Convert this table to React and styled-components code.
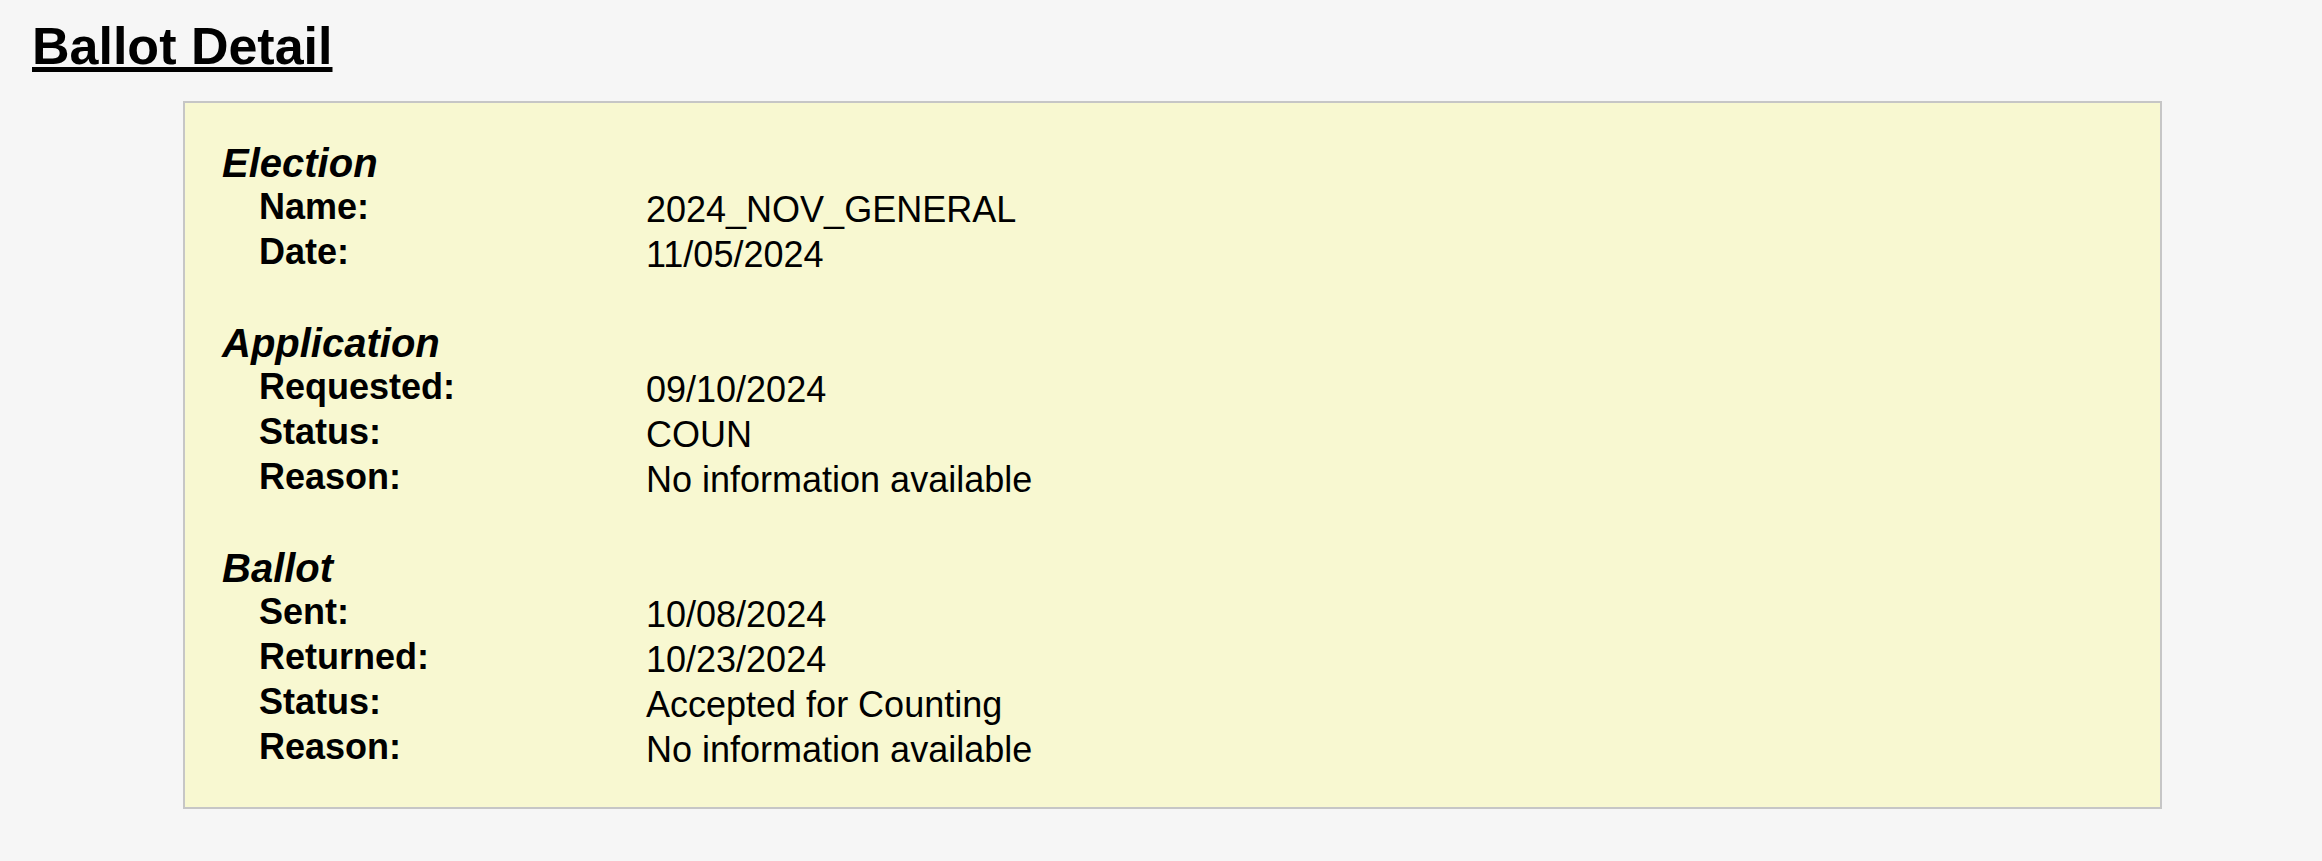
import React from "react";
import styled, { createGlobalStyle } from "styled-components";

const GlobalStyle = createGlobalStyle`
  html, body {
    margin: 0;
    padding: 0;
    background: #f6f6f6;
  }
  body {
    font-family: "Liberation Sans", Arial, Helvetica, sans-serif;
    color: #000;
  }
`;

const Page = styled.main`
  padding: 16px 160px 40px 32px;
`;

const Title = styled.h1`
  margin: 0;
  font-size: 52px;
  line-height: 60px;
  font-weight: 700;
  text-decoration: underline;
`;

const Panel = styled.section`
  margin: 25px 0 0 151px;
  border: 2px solid #c6c6c6;
  background: #f8f8d1;
  padding: 37px 37px 35px;
  display: flex;
  flex-direction: column;
  gap: 43px;
`;

const Group = styled.div`
  display: flex;
  flex-direction: column;
`;

const GroupTitle = styled.h2`
  margin: 0;
  font-size: 40px;
  line-height: 47px;
  font-weight: 700;
  font-style: italic;
`;

const Row = styled.div`
  display: grid;
  grid-template-columns: 387px 1fr;
  align-items: start;
  margin-left: 37px;
`;

const Label = styled.span`
  font-size: 36px;
  line-height: 40px;
  font-weight: 700;
`;

const Value = styled.span`
  font-size: 36px;
  line-height: 45px;
  font-weight: 400;
`;

const groups = [
  {
    title: "Election",
    rows: [
      ["Name:", "2024_NOV_GENERAL"],
      ["Date:", "11/05/2024"],
    ],
  },
  {
    title: "Application",
    rows: [
      ["Requested:", "09/10/2024"],
      ["Status:", "COUN"],
      ["Reason:", "No information available"],
    ],
  },
  {
    title: "Ballot",
    rows: [
      ["Sent:", "10/08/2024"],
      ["Returned:", "10/23/2024"],
      ["Status:", "Accepted for Counting"],
      ["Reason:", "No information available"],
    ],
  },
];

export default function App() {
  return (
    <>
      <GlobalStyle />
      <Page>
        <Title>Ballot Detail</Title>
        <Panel>
          {groups.map((g) => (
            <Group key={g.title}>
              <GroupTitle>{g.title}</GroupTitle>
              {g.rows.map(([label, value]) => (
                <Row key={label}>
                  <Label>{label}</Label>
                  <Value>{value}</Value>
                </Row>
              ))}
            </Group>
          ))}
        </Panel>
      </Page>
    </>
  );
}
